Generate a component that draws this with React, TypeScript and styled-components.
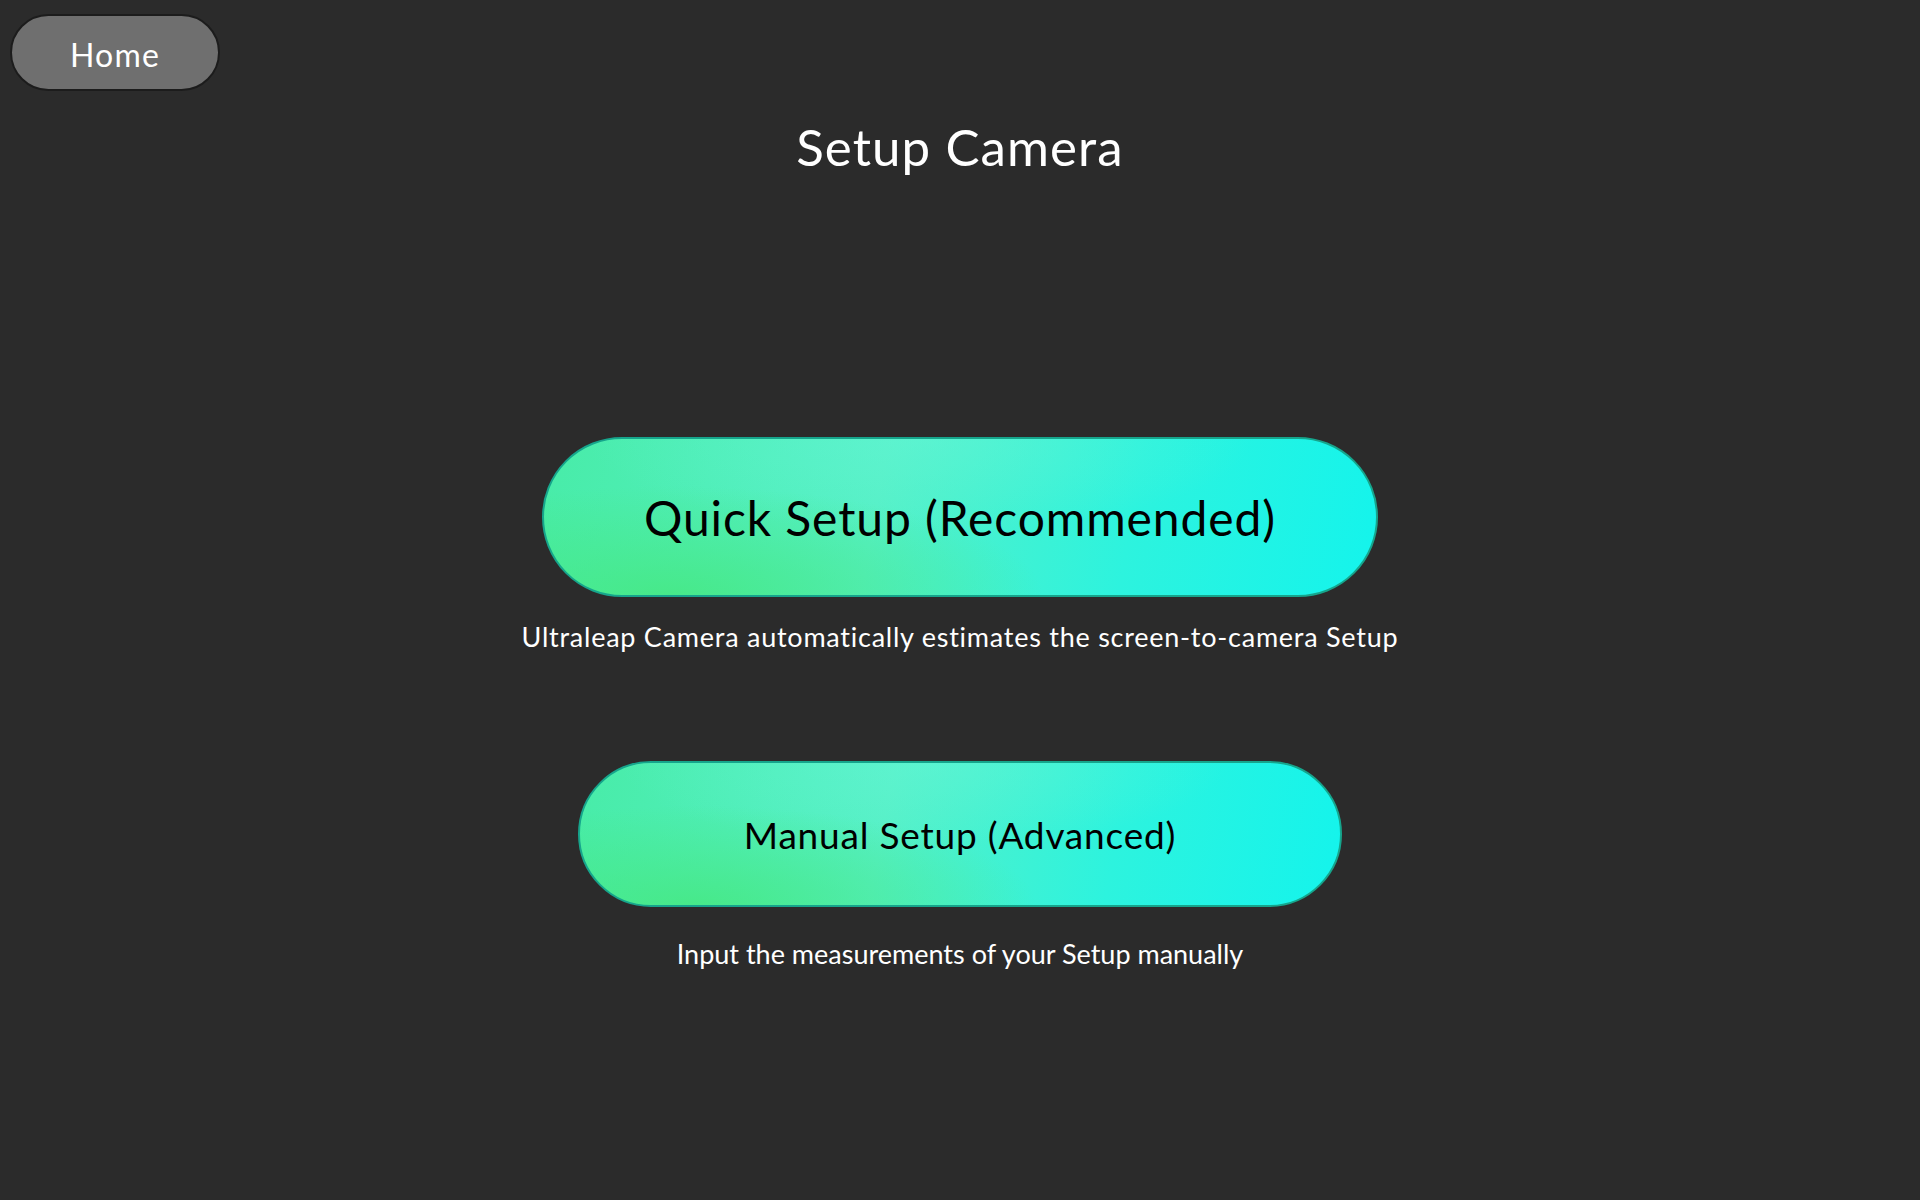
import React from 'react';
import { styled, createGlobalStyle } from 'styled-components';

const GlobalStyle = createGlobalStyle`
  html, body {
    margin: 0;
    padding: 0;
    background: #2b2b2b;
  }
  * {
    box-sizing: border-box;
  }
`;

interface OptionProps {
  label: string;
  desc: string;
  size: 'large' | 'small';
}

const SetupOption = ({ label, desc, size }: OptionProps) => {
  return (
    <Styled.Option>
      <Styled.GradientButton $size={size}>{label}</Styled.GradientButton>
      <Styled.Description $size={size}>{desc}</Styled.Description>
    </Styled.Option>
  );
};

export default function App() {
  return (
    <>
      <GlobalStyle />
      <Styled.Page>
        <Styled.Header>
          <Styled.HomeButton>Home</Styled.HomeButton>
        </Styled.Header>
        <Styled.Title>Setup Camera</Styled.Title>
        <Styled.Options>
          <SetupOption
            size="large"
            label="Quick Setup (Recommended)"
            desc="Ultraleap Camera automatically estimates the screen-to-camera Setup"
          />
          <SetupOption
            size="small"
            label="Manual Setup (Advanced)"
            desc="Input the measurements of your Setup manually"
          />
        </Styled.Options>
      </Styled.Page>
    </>
  );
}

const Styled = {
  Page: styled.main`
    width: 100%;
    min-height: 100vh;
    background: #2b2b2b;
    font-family: 'Lato', 'Liberation Sans', sans-serif;
    color: #ffffff;
    display: flex;
    flex-direction: column;
  `,
  Header: styled.header`
    display: flex;
    padding: 14px 0 0 10px;
  `,
  HomeButton: styled.button`
    width: 210px;
    height: 77px;
    padding: 4px 0 0;
    border-radius: 39px;
    border: 2px solid #1c1c1c;
    background: #6f6f6f;
    color: #ffffff;
    font-family: inherit;
    font-size: 32px;
    letter-spacing: 1.2px;
    cursor: pointer;
  `,
  Title: styled.h1`
    margin: 26px 0 0;
    text-align: center;
    font-size: 51px;
    line-height: 60px;
    font-weight: 400;
    letter-spacing: 1.1px;
  `,
  Options: styled.section`
    display: flex;
    flex-direction: column;
    align-items: center;
    margin-top: 260px;
    gap: 108px;
  `,
  Option: styled.div`
    display: flex;
    flex-direction: column;
    align-items: center;
  `,
  GradientButton: styled.button<{ $size: 'large' | 'small' }>`
    width: ${({ $size }) => ($size === 'large' ? '836px' : '764px')};
    height: ${({ $size }) => ($size === 'large' ? '160px' : '146px')};
    border-radius: 80px;
    border: 2px solid #16a58c;
    background:
      radial-gradient(ellipse 45% 70% at 15% 100%, rgba(70, 232, 130, 0.85), rgba(70, 232, 130, 0) 100%),
      radial-gradient(ellipse 40% 60% at 45% 0%, rgba(100, 246, 215, 0.5), rgba(100, 246, 215, 0) 100%),
      linear-gradient(100deg, #48eca8 0%, #56f0c6 40%, #2df3de 70%, #14f4ec 100%);
    color: #000000;
    font-family: inherit;
    font-size: ${({ $size }) => ($size === 'large' ? '48px' : '37px')};
    font-weight: 400;
    letter-spacing: ${({ $size }) => ($size === 'large' ? '0.9px' : '0.8px')};
    cursor: pointer;
  `,
  Description: styled.p<{ $size: 'large' | 'small' }>`
    margin: ${({ $size }) => ($size === 'large' ? '24px 0 0' : '31px 0 0')};
    font-size: 27px;
    line-height: 32px;
    letter-spacing: ${({ $size }) => ($size === 'large' ? '0.75px' : '0')};
    color: #ffffff;
  `,
};
